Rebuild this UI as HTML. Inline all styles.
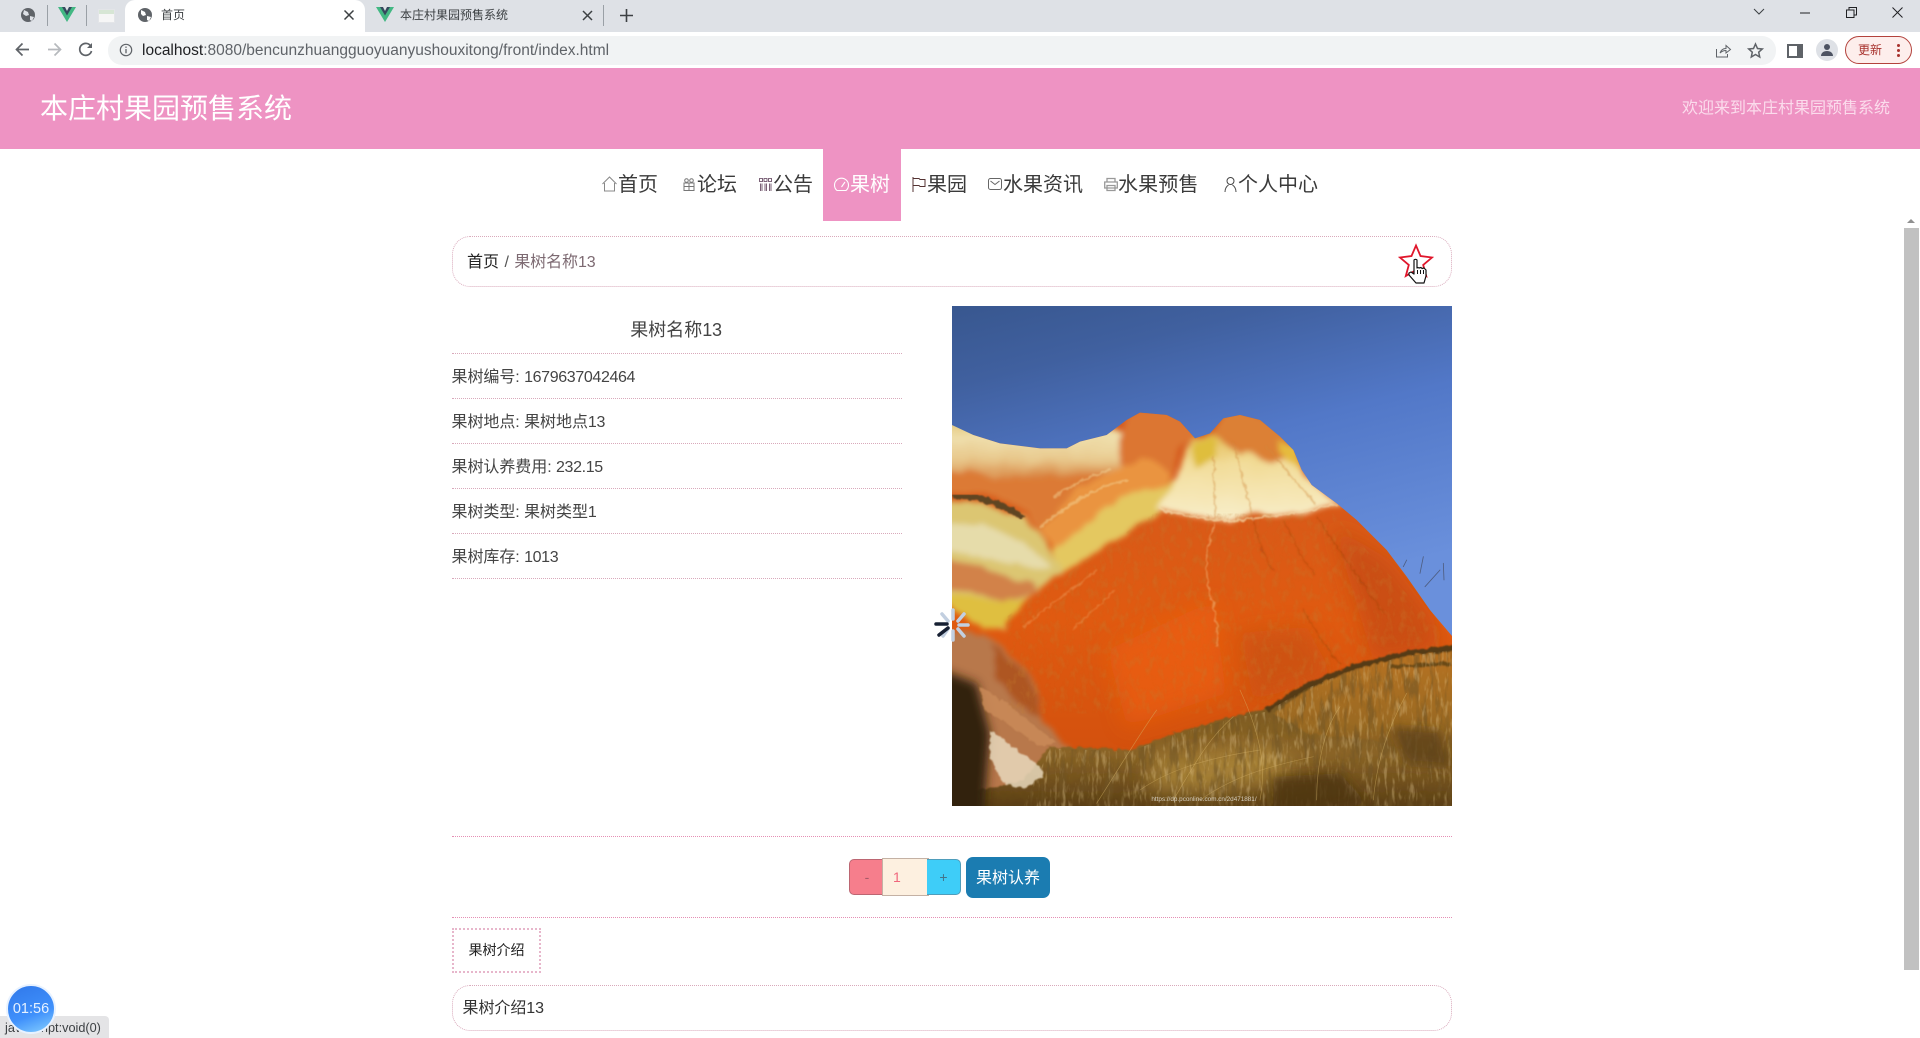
<!DOCTYPE html>
<html lang="zh-CN"><head><meta charset="utf-8"><title>本庄村果园预售系统</title>
<style>
html,body{margin:0;padding:0;width:1920px;height:1038px;overflow:hidden;background:#fff}
body{position:relative;font-family:"Liberation Sans","Noto Sans CJK SC",sans-serif;color:#333}
.a{position:absolute;white-space:nowrap}
.line{position:absolute;left:452px;height:0;border-top:1px dotted #d9a9bb}
.nav{position:absolute;top:171px;font-size:20px;line-height:28px;color:#3a3a3a;white-space:nowrap}
.row{position:absolute;left:451.500px;font-size:16px;line-height:24px;color:#444;white-space:nowrap;letter-spacing:-.05px}
.row i{font-style:normal;letter-spacing:-.36px}
svg{position:absolute;overflow:visible}
</style></head><body>

<!-- browser chrome -->
<div class="a" style="left:0;top:0;width:1920px;height:32px;background:#dee1e6"></div>
<div class="a" style="left:0;top:32px;width:1920px;height:36px;background:#fff"></div>
<div class="a" style="left:125px;top:0;width:240px;height:32px;background:#fff;border-radius:10px 10px 0 0"></div>
<svg style="left:20px;top:6px" width="20" height="20" viewBox="0 0 20 20"><circle cx="8" cy="9" r="7" fill="#5f6368"/><path d="M4 4l4 2 1 3-3 1-3-2zM10 10l4 1-2 4-2-1z" fill="#dee1e6"/></svg>
<div class="a" style="left:47px;top:5px;width:1px;height:21px;background:#9aa0a6"></div>
<svg style="left:58px;top:6px" width="18" height="16" viewBox="0 0 18 16"><path d="M0 1h5l4 7 4-7h5L9 16z" fill="#42b883"/><path d="M4 1h3l2 4 2-4h3L9 9.500z" fill="#35495e"/></svg>
<div class="a" style="left:86px;top:5px;width:1px;height:21px;background:#9aa0a6"></div>
<div class="a" style="left:98px;top:9px;width:15px;height:12px;background:linear-gradient(#d7e6d5 0 35%,#f6f6f6 35%);border:1px solid #e3e5e8"></div>
<svg style="left:138px;top:6px" width="20" height="20" viewBox="0 0 20 20"><circle cx="7" cy="9" r="7" fill="#5f6368"/><path d="M3 4l4 2 1 3-3 1-2-2zM9 10l4 1-2 4-2-1z" fill="#fff"/></svg>
<div class="a" style="left:161px;top:7px;font-size:12px;line-height:17px;color:#3c4043">首页</div>
<svg style="left:344px;top:10px" width="10" height="10" viewBox="0 0 10 10"><path d="M.5.500l9 9M9.500.500l-9 9" stroke="#3c4043" stroke-width="1.500"/></svg>
<svg style="left:376px;top:6px" width="18" height="16" viewBox="0 0 18 16"><path d="M0 1h5l4 7 4-7h5L9 16z" fill="#42b883"/><path d="M4 1h3l2 4 2-4h3L9 9.500z" fill="#35495e"/></svg>
<div class="a" style="left:400px;top:7px;font-size:12px;line-height:17px;color:#3c4043">本庄村果园预售系统</div>
<svg style="left:582px;top:10px" width="11" height="11" viewBox="0 0 11 11"><path d="M1 1l9 9M10 1l-9 9" stroke="#3c4043" stroke-width="1.500"/></svg>
<div class="a" style="left:603px;top:5px;width:1px;height:21px;background:#9aa0a6"></div>
<svg style="left:619.500px;top:9px" width="13" height="13" viewBox="0 0 13 13"><path d="M6.500 0v13M0 6.500h13" stroke="#3c4043" stroke-width="1.600"/></svg>
<svg style="left:1753px;top:8px" width="12" height="8" viewBox="0 0 12 8"><path d="M1 1l5 5 5-5" stroke="#3c4043" fill="none"/></svg>
<svg style="left:1800px;top:12px" width="10" height="2" viewBox="0 0 10 2"><path d="M0 1h10" stroke="#202124" stroke-width="1"/></svg>
<svg style="left:1846px;top:7px" width="11" height="11" viewBox="0 0 11 11"><path d="M.5 3h7.500v7.500H.5zM3 3V.5h7.500V8H8" stroke="#202124" fill="none"/></svg>
<svg style="left:1892px;top:7px" width="11" height="11" viewBox="0 0 11 11"><path d="M.5.500l10 10M10.500.500l-10 10" stroke="#202124"/></svg>

<svg style="left:14.500px;top:42px" width="15" height="15" viewBox="0 0 15 15"><path d="M14 7.500H2M7.500 1.500l-6 6 6 6" stroke="#5f6368" stroke-width="1.700" fill="none"/></svg>
<svg style="left:46.500px;top:42px" width="15" height="15" viewBox="0 0 15 15"><path d="M1 7.500h12M7.500 1.500l6 6-6 6" stroke="#b6b9bd" stroke-width="1.700" fill="none"/></svg>
<svg style="left:78px;top:42px" width="15" height="15" viewBox="0 0 15 15"><path d="M13 4.500A6 6 0 1 0 13.500 9" stroke="#5f6368" stroke-width="1.700" fill="none"/><path d="M14 1v5H9z" fill="#5f6368"/></svg>
<div class="a" style="left:108px;top:36px;width:1668px;height:29px;background:#f1f3f4;border-radius:14px"></div>
<svg style="left:119px;top:43px" width="14" height="14" viewBox="0 0 14 14"><circle cx="7" cy="7" r="5.700" stroke="#5f6368" stroke-width="1.200" fill="none"/><path d="M7 6v4.300M7 3.500v1.400" stroke="#5f6368" stroke-width="1.300"/></svg>
<div class="a" style="left:142px;top:42px;font-size:15.500px;line-height:18px;color:#5f6368"><span style="color:#202124">localhost</span>:8080/bencunzhuangguoyuanyushouxitong/front/index.html</div>
<svg style="left:1716px;top:43px" width="15" height="15" viewBox="0 0 15 15"><path d="M.5 6v8h11V11" stroke="#5f6368" fill="none"/><path d="M4 10c1-3 3-4.500 6-4.500V2.500l4.500 4L10 10V7.500C7.500 7.500 5.500 8.500 4 10z" stroke="#5f6368" fill="none"/></svg>
<svg style="left:1748px;top:43px" width="15" height="15" viewBox="0 0 15 15"><path d="M7.500 1l2 4.500 4.800.5-3.600 3.200 1 4.800-4.200-2.500L3.300 14l1-4.800L.7 6l4.800-.5z" stroke="#5f6368" stroke-width="1.500" fill="none"/></svg>
<div class="a" style="left:1787px;top:44px;width:8px;height:10px;border:2px solid #5f6368;border-right-width:6px;background:#fff"></div>
<div class="a" style="left:1816px;top:39px;width:22px;height:22px;border-radius:50%;background:#dee1e6"></div>
<svg style="left:1820px;top:44px" width="14" height="12" viewBox="0 0 14 12"><circle cx="7" cy="3" r="3" fill="#4d5362"/><path d="M1 12c0-3 2.500-5 6-5s6 2 6 5z" fill="#4d5362"/></svg>
<div class="a" style="left:1845px;top:36px;width:65px;height:26px;border:1px solid #b3423c;border-radius:14px;background:#fdeeec"></div>
<div class="a" style="left:1858px;top:42px;font-size:12px;line-height:16px;color:#a8322d">更新</div>
<div class="a" style="left:1897px;top:44px;width:3px;height:3px;border-radius:50%;background:#a8322d;box-shadow:0 5px #a8322d,0 10px #a8322d"></div>

<!-- header -->
<div class="a" style="left:0;top:68px;width:1920px;height:81px;background:#ee93c3"></div>
<div class="a" style="left:40px;top:89px;font-size:28px;line-height:40px;color:#fff">本庄村果园预售系统</div>
<div class="a" style="left:1682px;top:96.500px;font-size:16px;line-height:24px;color:#fbdcec">欢迎来到本庄村果园预售系统</div>

<!-- nav -->
<div class="a" style="left:823px;top:149px;width:78px;height:72px;background:#ee93c3"></div>
<svg style="left:602px;top:176px" width="15" height="16" viewBox="0 0 15 16" fill="none" stroke="#888"><path d="M.5 8L7.500 1l7 7M2.500 7v8h10V7"/></svg>
<div class="nav" style="left:618px">首页</div>
<svg style="left:683px;top:178px" width="12" height="13" viewBox="0 0 12 13" fill="none" stroke="#777"><path d="M1 5h10v7.500H1zM6 5v7.500M1 8.500h10"/><circle cx="3.500" cy="2.500" r="1.800"/><circle cx="8.500" cy="2.500" r="1.800"/></svg>
<div class="nav" style="left:697px">论坛</div>
<svg style="left:759px;top:178px" width="13" height="13" viewBox="0 0 13 13" fill="none" stroke="#5a3a55" stroke-width=".8"><path d="M.5.500h3v3h-3zM5 .5h3v3H5zM9.500.500h3v3h-3zM1.500 5.500v7.500M3 5.500v7.500M6 5.500v7.500M7.500 5.500v7.500M10.500 5.500v7.500M12 5.500v7.500"/></svg>
<div class="nav" style="left:773px">公告</div>
<svg style="left:834px;top:178px" width="15" height="13" viewBox="0 0 15 13" fill="none" stroke="#fff" stroke-width="1.100"><path d="M3 12.500a7 7 0 1 1 9 0zM7.500 9l3.500-5"/></svg>
<div class="nav" style="left:850px;color:#fff">果树</div>
<svg style="left:912px;top:177px" width="14" height="15" viewBox="0 0 14 15" fill="none" stroke="#533"><path d="M1 0v15M1 1.500h6l1 1h5v7H8l-1-1H1"/></svg>
<div class="nav" style="left:927px">果园</div>
<svg style="left:988px;top:178px" width="14" height="12" viewBox="0 0 14 12" fill="none" stroke="#666"><rect x=".5" y=".5" width="13" height="11" rx="2"/><path d="M2.500 3l4.500 3.500L11.500 3"/></svg>
<div class="nav" style="left:1003px">水果资讯</div>
<svg style="left:1104px;top:177px" width="14" height="14" viewBox="0 0 14 14" fill="none" stroke="#999" stroke-width="1.300"><path d="M3 5V1.500h8V5M.7 5h12.600v6H.7zM3 8.500h8v5H3z"/></svg>
<div class="nav" style="left:1118px;letter-spacing:.15px">水果预售</div>
<svg style="left:1224px;top:177px" width="13" height="15" viewBox="0 0 13 15" fill="none" stroke="#444"><circle cx="6.500" cy="4" r="3.500"/><path d="M1 15c0-4 2-6 3.500-7M12 15c0-4-2-6-3.500-7"/></svg>
<div class="nav" style="left:1238px">个人中心</div>

<!-- breadcrumb -->
<div class="a" style="left:452px;top:236px;width:998px;height:49px;border:1px dotted #d9a9bb;border-radius:18px"></div>
<div class="a" style="left:467px;top:250.500px;font-size:16px;line-height:24px;color:#222">首页 <span style="color:#555;margin:0 1px">/</span> <span style="color:#7d6a72;letter-spacing:-.1px">果树名称13</span></div>
<svg style="left:1398.500px;top:244px" width="34" height="33" viewBox="0 0 34 33"><path d="M17 1.500l4.500 10.500 11.500 1.500-8.800 7.500 3 11-10.200-6-10.200 6 3-11L1 13.500 12.500 12z" fill="#fff" stroke="#e0162b" stroke-width="1.800"/></svg>

<!-- info -->
<div class="a" style="left:451px;top:316.500px;width:450px;text-align:center;font-size:18px;line-height:26px;color:#444">果树名称<span style="letter-spacing:-.3px">13</span></div>
<div class="line" style="top:353px;width:450px"></div>
<div class="row" style="top:366px">果树编号: <i>1679637042464</i></div>
<div class="line" style="top:398px;width:450px"></div>
<div class="row" style="top:411px">果树地点: 果树地点<i>13</i></div>
<div class="line" style="top:443px;width:450px"></div>
<div class="row" style="top:456px">果树认养费用: <i>232.15</i></div>
<div class="line" style="top:488px;width:450px"></div>
<div class="row" style="top:501px">果树类型: 果树类型<i>1</i></div>
<div class="line" style="top:533px;width:450px"></div>
<div class="row" style="top:546px">果树库存: <i>1013</i></div>
<div class="line" style="top:578px;width:450px"></div>

<!-- painted image -->
<svg style="left:952px;top:306px;overflow:hidden" width="500" height="500" viewBox="36 18 1500 1500" preserveAspectRatio="none">
<defs>
<linearGradient id="sky" x1="0" y1="0" x2=".25" y2="1"><stop offset="0" stop-color="#38578f"/><stop offset=".15" stop-color="#40609f"/><stop offset=".38" stop-color="#5278c8"/><stop offset=".7" stop-color="#6a90dc"/></linearGradient>
<linearGradient id="red" x1="0" y1="0" x2="0" y2="1"><stop offset="0" stop-color="#d25a20"/><stop offset=".5" stop-color="#e05a10"/><stop offset="1" stop-color="#cc4c0c"/></linearGradient>
<linearGradient id="cream" x1="0" y1="0" x2="0" y2="1"><stop offset="0" stop-color="#e0b44a"/><stop offset=".35" stop-color="#f2dc98"/><stop offset="1" stop-color="#f8eecb"/></linearGradient>
<linearGradient id="band" x1="0" y1="0" x2="0" y2="1"><stop offset="0" stop-color="#e0bb63"/><stop offset=".35" stop-color="#efe0ae"/><stop offset=".7" stop-color="#e8c88c"/><stop offset="1" stop-color="#d8803c"/></linearGradient>
<linearGradient id="grass" x1="0" y1="0" x2="0" y2="1"><stop offset="0" stop-color="#55390f"/><stop offset=".3" stop-color="#7a5820"/><stop offset=".6" stop-color="#8a6426"/><stop offset="1" stop-color="#48300e"/></linearGradient>
<linearGradient id="hill" x1="0" y1="0" x2="0" y2="1"><stop offset="0" stop-color="#b87220"/><stop offset=".6" stop-color="#9a6a22"/><stop offset="1" stop-color="#74531c"/></linearGradient>
<filter id="rough" x="-5%" y="-5%" width="110%" height="110%"><feTurbulence type="fractalNoise" baseFrequency=".014" numOctaves="3" seed="4" result="n"/><feDisplacementMap in="SourceGraphic" in2="n" scale="34" xChannelSelector="R" yChannelSelector="G"/><feGaussianBlur stdDeviation="9"/></filter>
<filter id="rough2" x="-5%" y="-5%" width="110%" height="110%"><feTurbulence type="fractalNoise" baseFrequency=".06" numOctaves="2" seed="9" result="n"/><feDisplacementMap in="SourceGraphic" in2="n" scale="16" xChannelSelector="R" yChannelSelector="G"/><feGaussianBlur stdDeviation="2"/></filter>
<filter id="b14" x="-20%" y="-20%" width="140%" height="140%"><feGaussianBlur stdDeviation="14"/></filter>
<filter id="b30" x="-30%" y="-30%" width="160%" height="160%"><feGaussianBlur stdDeviation="30"/></filter>
<filter id="st1" x="0" y="0" width="100%" height="100%"><feTurbulence type="fractalNoise" baseFrequency=".05 .01" numOctaves="3" seed="7"/><feColorMatrix values="0 0 0 0 .16 0 0 0 0 .09 0 0 0 0 .02 0 0 0 4 -1.900"/><feComposite in2="SourceAlpha" operator="in"/></filter>
<filter id="st2" x="0" y="0" width="100%" height="100%"><feTurbulence type="fractalNoise" baseFrequency=".09 .02" numOctaves="3" seed="21"/><feColorMatrix values="0 0 0 0 .85 0 0 0 0 .66 0 0 0 0 .34 0 0 0 4 -2.100"/><feComposite in2="SourceAlpha" operator="in"/></filter>
<filter id="sp" x="0" y="0" width="100%" height="100%"><feTurbulence type="fractalNoise" baseFrequency=".05 .03" numOctaves="4" seed="3"/><feColorMatrix values="0 0 0 0 .55 0 0 0 0 .2 0 0 0 0 .03 0 0 0 2.600 -1.200"/><feComposite in2="SourceAlpha" operator="in"/></filter>
<clipPath id="mt"><path d="M36 375L100 405 180 430 300 445 380 445 420 425 500 405 560 360 600 338 680 345 720 365 765 415 810 400 850 355 900 345 960 360 1020 410 1060 450 1085 510 1115 555 1190 610 1250 660 1340 750 1400 830 1470 930 1536 1020V1518H36z"/></clipPath>
</defs>
<rect x="36" y="18" width="1500" height="1500" fill="url(#sky)"/>
<path d="M-20 360L100 405 180 430 300 445 380 445 420 425 500 405 560 360 600 338 680 345 720 365 765 415 810 400 850 355 900 345 960 360 1020 410 1060 450 1085 510 1115 555 1190 610 1250 660 1340 750 1400 830 1470 930 1580 1060V1580H-20z" fill="url(#red)"/>
<g clip-path="url(#mt)">
<g filter="url(#rough)">
<path d="M-20 340L100 380 180 410 300 420 380 420 420 400 500 380 600 430 590 530 420 530 300 540 200 530-20 500z" fill="url(#band)"/>
<path d="M-20 500L200 530 300 540 420 530 540 520 420 620 320 700 300 690 260 640 170 590-20 575z" fill="#dc7a36"/>
<path d="M540 400L560 350 600 320 680 330 740 360 780 415 720 440 700 530 640 570 560 510 540 500z" fill="#dc7630"/>
<path d="M420 560L560 500 610 470 660 490 700 530 640 600 560 660 460 720 350 750 330 720 300 690z" fill="#ea9440"/>
<path d="M540 590L640 570 720 540 660 640 560 700 450 770 360 820 340 750z" fill="#e4c860"/>
<path d="M-20 600L130 620 250 650 310 710 350 780 370 820 240 900 190 990 130 980-20 880z" fill="#dcc672"/>
<path d="M-20 660L130 670 230 720 300 770 340 800 280 810 180 780 80 770-20 750z" fill="#e6dcaa"/>
<path d="M-20 780L130 795 200 830 280 850 300 870 190 905 100 885-20 865z" fill="#d28248"/>
<path d="M-20 880L100 895 190 905 260 890 190 985 130 985z" fill="#dfbf40"/>
<path d="M650 625L700 560 725 480 750 420 815 400 905 465 960 395 1020 410 1070 440 1095 510 1125 555 1210 610 1100 640 1010 650 930 640 880 665 800 655 720 640z" fill="url(#cream)"/>
<path d="M815 395L850 340 900 330 960 345 1030 400 1055 470 1000 490 900 450 850 420z" fill="#dc8034"/>
<path d="M1010 420L1070 440 1090 510 1040 490z" fill="#e6bb3c"/>
<path d="M755 430L820 410 835 470 760 510z" fill="#dfbe3c"/>
<path d="M-20 985L130 1000 200 1060 270 1130 305 1190 300 1270 400 1340 300 1470-20 1580z" fill="#b8784c"/>
<path d="M150 1030L250 1120 300 1190 300 1260 240 1220 170 1130z" fill="#ae5620"/>
</g>
<path d="M36 590C100 580 190 610 250 655" stroke="#5f4420" stroke-width="18" fill="none" filter="url(#rough2)"/>
<g filter="url(#b30)">
<path d="M1180 680L1350 780 1480 950 1500 1050 1300 1080z" fill="#b8421a" opacity=".5"/>
<path d="M500 1050L820 900 860 1180 560 1280z" fill="#ee600a" opacity=".65"/>
<path d="M900 1000L1100 980 1180 1130 940 1200z" fill="#c24f18" opacity=".55"/>
</g>
<path d="M200 950L640 640 1180 640 1536 1030V1240H200z" fill="#000" filter="url(#sp)" opacity=".35"/>
<g fill="none" stroke-linecap="round" filter="url(#rough2)">
<path d="M880 430C900 500 920 580 935 640M980 440C1030 500 1090 570 1125 610M820 470C820 540 830 600 825 660" stroke="#d08a3c" stroke-width="5" opacity=".4"/>
<path d="M660 625C720 650 800 655 880 665 950 650 1040 650 1190 612" stroke="#f4d9a8" stroke-width="6" opacity=".7"/>
<path d="M825 670C800 730 790 800 810 880 825 930 840 1000 830 1040" stroke="#f2c48a" stroke-width="4" opacity=".55"/>
<path d="M940 650C950 720 970 770 1000 810M1030 660C1060 720 1090 790 1125 820" stroke="#a94410" stroke-width="3" opacity=".55"/>
<path d="M1130 650C1200 760 1270 850 1330 940M1090 930C1120 980 1160 1050 1200 1090" stroke="#9c3f10" stroke-width="3" opacity=".5"/>
<path d="M470 810C400 870 320 920 250 980M520 870C480 920 430 950 400 990" stroke="#f0b070" stroke-width="4" opacity=".4"/>
<path d="M340 590C390 560 440 530 510 510M300 680C380 620 460 560 560 540" stroke="#f3dca0" stroke-width="7" opacity=".45"/>
</g>
</g>
<!-- foreground -->
<g filter="url(#rough2)">
<path d="M330 1340L500 1345 570 1352 700 1300 860 1255 980 1225 1100 1150 1250 1090 1400 1052 1580 1030V1580H-20V1500L250 1440z" fill="url(#grass)"/>
<path d="M1000 1240L1100 1170 1250 1105 1400 1068 1580 1050V1420L1300 1320 1100 1300z" fill="url(#hill)"/>
<path d="M980 1230L1100 1158 1250 1098 1400 1060 1580 1042" stroke="#553a12" stroke-width="16" fill="none"/>
<path d="M1350 1100L1536 1090" stroke="#6a4a18" stroke-width="12" fill="none"/>
</g>
<g filter="url(#b30)">
<path d="M640 1380L1000 1340 1080 1430 820 1480 620 1470z" fill="#b8923f" opacity=".7"/>
</g>
<path d="M330 1345L570 1355 700 1305 860 1260 980 1235 1100 1165 1250 1105 1400 1068 1536 1050V1518H250z" fill="#000" filter="url(#st1)" opacity=".55"/>
<path d="M330 1345L570 1355 700 1305 860 1260 980 1235 1100 1165 1250 1105 1400 1068 1536 1050V1518H250z" fill="#000" filter="url(#st2)" opacity=".32"/>
<g filter="url(#b14)">
<path d="M-20 1100L110 1150 150 1300 130 1580H-20z" fill="#33210f"/>
<path d="M1000 1430L1200 1420 1280 1510 1000 1560z" fill="#4e3410" opacity=".8"/>
<path d="M1350 1280L1500 1290 1530 1400 1400 1390z" fill="#5f4216" opacity=".8"/>
</g>
<g filter="url(#rough2)">
<path d="M150 1290L220 1340 300 1400 310 1430 250 1465 190 1450 150 1370z" fill="#e8d8bc" opacity=".85"/>
<path d="M120 1160L200 1210 300 1290 350 1330 300 1340 200 1270 130 1230z" fill="#c98a58" opacity=".85"/>
</g>
<g fill="none" stroke-linecap="round">
<path d="M470 1510C540 1400 600 1300 650 1230M700 1500C760 1400 800 1320 880 1250M960 1500C980 1400 960 1300 900 1170M1130 1500C1130 1400 1150 1290 1200 1220M1300 1500C1310 1390 1340 1290 1400 1180" stroke="#d8b56a" stroke-width="2" opacity=".5"/>
<path d="M600 1470C700 1400 830 1370 960 1350M780 1500C880 1430 980 1400 1120 1370" stroke="#d0ac64" stroke-width="2" opacity=".45"/>
<path d="M1400 780L1390 800M1450 770L1440 820M1510 790L1512 840M1455 860L1500 810" stroke="#4e5d80" stroke-width="2.500"/>
</g>
<text x="792" y="1503" text-anchor="middle" font-family="Liberation Sans,sans-serif" font-size="19" fill="#e8e4da" opacity=".85">https://dp.pconline.com.cn/2d471881/</text>
</svg>

<!-- spinner -->
<svg style="left:934px;top:606px" width="38" height="38" viewBox="-19 -19 38 38" stroke-width="3.500" stroke-linecap="round">
<g stroke="#c2cfe0"><path d="M0-6V-15M5-4l6-7M6 0h9M5 4l6 7M0 6v9M-5 4l-5 7M-5-4l-6-7"/></g>
<path d="M-6-1h-11M-5 3l-9 7" stroke="#172033"/>
</svg>

<!-- quantity -->
<div class="line" style="top:836px;width:1000px;border-top-color:#e58fb4"></div>
<div class="a" style="left:849px;top:859px;width:34px;height:34px;background:#f67e8c;border:1px solid #bc6672;border-right:none;border-radius:5px 0 0 5px;text-align:center;font-size:14px;line-height:34px;color:#a85a68">-</div>
<div class="a" style="left:882px;top:858px;width:35px;height:36px;padding-left:10px;background:#fdf0e0;border:1px solid #c4b1a4;font-size:14px;line-height:36px;color:#f0667c">1</div>
<div class="a" style="left:927px;top:859px;width:33px;height:34px;background:#3ecdf8;border:1px solid #4f9dbb;border-left:none;border-radius:0 5px 5px 0;text-align:center;font-size:14px;line-height:34px;color:#42748a">+</div>
<div class="a" style="left:966px;top:857px;width:84px;height:41px;background:#1b7cb1;border-radius:7px;text-align:center;font-size:16px;line-height:43px;color:#fff">果树认养</div>

<!-- tab -->
<div class="line" style="top:917px;width:1000px;border-top-color:#e58fb4"></div>
<div class="a" style="left:452px;top:928px;width:85px;height:41px;border:2px dotted #e7b6cb;text-align:center;font-size:14px;line-height:41px;color:#222">果树介绍</div>
<div class="a" style="left:452px;top:985px;width:998px;height:44px;border:1px dotted #d9a9bb;border-radius:18px"></div>
<div class="a" style="left:462.500px;top:997px;font-size:16px;line-height:24px;color:#333;letter-spacing:-.05px">果树介绍13</div>

<!-- scrollbar -->
<div class="a" style="left:1904px;top:218px;width:16px;height:820px;background:#fff"></div>
<div class="a" style="left:1907px;top:219px;width:0;height:0;border-left:4px solid transparent;border-right:4px solid transparent;border-bottom:4px solid #909090"></div>
<div class="a" style="left:1904px;top:228px;width:15px;height:742px;background:#c1c1c1"></div>

<!-- status bubble + timer -->
<div class="a" style="left:0;top:1016px;width:109px;height:22px;background:#e4e4e6;border-radius:0 4px 0 0;font-size:12.700px;line-height:24px;color:#3c4043;padding-left:5px;box-sizing:border-box">javascript:void(0)</div>
<div class="a" style="left:6px;top:984px;width:46px;height:46px;border-radius:50%;background:linear-gradient(160deg,#3078ea 0%,#3f90fb 60%,#86d0ff 100%);border:2px solid #e8f2ff;text-align:center;font-size:14.500px;line-height:46px;color:#e6f2ff">01:56</div>

<!-- cursor -->
<svg style="left:1407px;top:257px" width="24" height="28" viewBox="0 0 24 28"><path d="M7 3a2 2 0 0 1 3 0v8l1-.5 1 .5 2-.5 1 1 2-.5 2 2v6l-2 7H9l-7-8v-2l2-1 3 2z" fill="#fff" stroke="#111" stroke-width="1.200" stroke-linejoin="round"/><path d="M10.500 13v4M13.500 13v4M16.500 13v4" stroke="#111"/></svg>
</body></html>
